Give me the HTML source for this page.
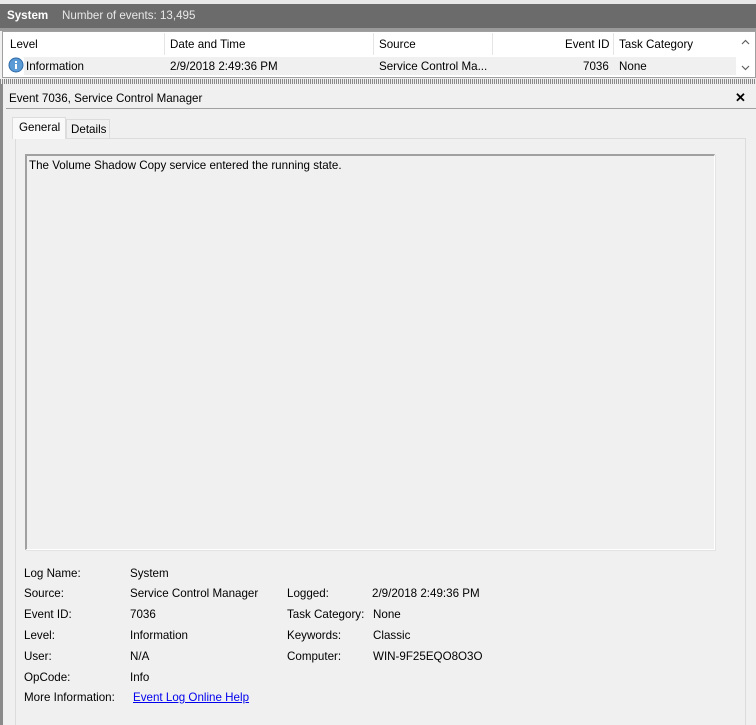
<!DOCTYPE html>
<html><head><meta charset="utf-8"><style>
*{margin:0;padding:0;box-sizing:border-box}
html,body{width:756px;height:725px;overflow:hidden}
body{background:#f0f0f0;font-family:"Liberation Sans",sans-serif;font-size:11.6px;color:#000;position:relative}
.a{position:absolute;white-space:nowrap}
</style></head><body>
<div class="a" style="left:0;top:0;width:756px;height:4px;background:#e8e8e8"></div>
<div class="a" style="left:0;top:4px;width:756px;height:24px;background:#6b6b6b"></div>
<div class="a" style="left:7px;top:9px;color:#fff;font-weight:bold">System</div>
<div class="a" style="left:62px;top:9px;color:#e8e8e8">Number of events: 13,495</div>
<div class="a" style="left:0;top:28px;width:756px;height:3px;background:#9a9a9a"></div>
<div class="a" style="left:2px;top:31px;width:754px;height:47px;background:#fff;border:1px solid #a0a0a0"></div>
<div class="a" style="left:164px;top:33px;width:1px;height:22px;background:#e5e5e5"></div>
<div class="a" style="left:373px;top:33px;width:1px;height:22px;background:#e5e5e5"></div>
<div class="a" style="left:492px;top:33px;width:1px;height:22px;background:#e5e5e5"></div>
<div class="a" style="left:613px;top:33px;width:1px;height:22px;background:#e5e5e5"></div>
<div class="a" style="left:10px;top:38px">Level</div>
<div class="a" style="left:170px;top:38px">Date and Time</div>
<div class="a" style="left:379px;top:38px">Source</div>
<div class="a" style="left:565px;top:38px">Event ID</div>
<div class="a" style="left:619px;top:38px">Task Category</div>
<div class="a" style="left:24px;top:57px;width:712px;height:18px;background:#f0f0f0"></div>
<svg class="a" style="left:8px;top:57px" width="16" height="16"><circle cx="8" cy="8" r="7" fill="#5b9bd5" stroke="#2f6aa8"/><rect x="7" y="7" width="2" height="5" fill="#fff"/><rect x="7" y="4" width="2" height="2" fill="#fff"/></svg>
<div class="a" style="left:26px;top:60px">Information</div>
<div class="a" style="left:170px;top:60px">2/9/2018 2:49:36 PM</div>
<div class="a" style="left:379px;top:60px">Service Control Ma...</div>
<div class="a" style="left:583px;top:60px">7036</div>
<div class="a" style="left:619px;top:60px">None</div>
<svg class="a" style="left:741px;top:39px" width="9" height="6"><path d="M1 5L4.5 1.5L8 5" fill="none" stroke="#606060" stroke-width="1.2"/></svg>
<svg class="a" style="left:741px;top:65px" width="9" height="6"><path d="M1 1L4.5 4.5L8 1" fill="none" stroke="#606060" stroke-width="1.2"/></svg>
<div class="a" style="left:0;top:79px;width:756px;height:5px;background:repeating-linear-gradient(90deg,#888 0 1px,#eee 1px 2px)"></div>
<div class="a" style="left:0;top:84px;width:3px;height:641px;background:#8a8a8a"></div>
<div class="a" style="left:9px;top:92px">Event 7036, Service Control Manager</div>
<div class="a" style="left:735px;top:90px;font-weight:bold;font-size:13px">&#10005;</div>
<div class="a" style="left:6px;top:108px;width:750px;height:1px;background:#a0a0a0"></div>
<div class="a" style="left:15px;top:138px;width:731px;height:587px;border:1px solid #dcdcdc;border-bottom:none;background:#f0f0f0"></div>
<div class="a" style="left:12px;top:117px;width:54px;height:22px;background:#f9f9f9;border:1px solid #dcdcdc;border-bottom:none"></div>
<div class="a" style="left:19px;top:121px">General</div>
<div class="a" style="left:66px;top:119px;width:44px;height:19px;border:1px solid #dcdcdc;border-bottom:none"></div>
<div class="a" style="left:71px;top:123px">Details</div>
<div class="a" style="left:25px;top:154px;width:690px;height:396px;border-top:2px solid #a0a0a0;border-left:2px solid #a0a0a0;border-right:1px solid #fff;border-bottom:1px solid #fff;box-shadow:1px 1px 0 #e3e3e3"></div>
<div class="a" style="left:29px;top:159px">The Volume Shadow Copy service entered the running state.</div>
<div class="a" style="left:24px;top:567px">Log Name:</div><div class="a" style="left:130px;top:567px">System</div>
<div class="a" style="left:24px;top:587px">Source:</div><div class="a" style="left:130px;top:587px">Service Control Manager</div>
<div class="a" style="left:287px;top:587px">Logged:</div><div class="a" style="left:372px;top:587px">2/9/2018 2:49:36 PM</div>
<div class="a" style="left:24px;top:608px">Event ID:</div><div class="a" style="left:130px;top:608px">7036</div>
<div class="a" style="left:287px;top:608px">Task Category:</div><div class="a" style="left:373px;top:608px">None</div>
<div class="a" style="left:24px;top:629px">Level:</div><div class="a" style="left:130px;top:629px">Information</div>
<div class="a" style="left:287px;top:629px">Keywords:</div><div class="a" style="left:373px;top:629px">Classic</div>
<div class="a" style="left:24px;top:650px">User:</div><div class="a" style="left:130px;top:650px">N/A</div>
<div class="a" style="left:287px;top:650px">Computer:</div><div class="a" style="left:373px;top:650px">WIN-9F25EQO8O3O</div>
<div class="a" style="left:24px;top:671px">OpCode:</div><div class="a" style="left:130px;top:671px">Info</div>
<div class="a" style="left:24px;top:691px">More Information:</div><div class="a" style="left:133px;top:691px;color:#0000ee;text-decoration:underline">Event Log Online Help</div>
</body></html>
